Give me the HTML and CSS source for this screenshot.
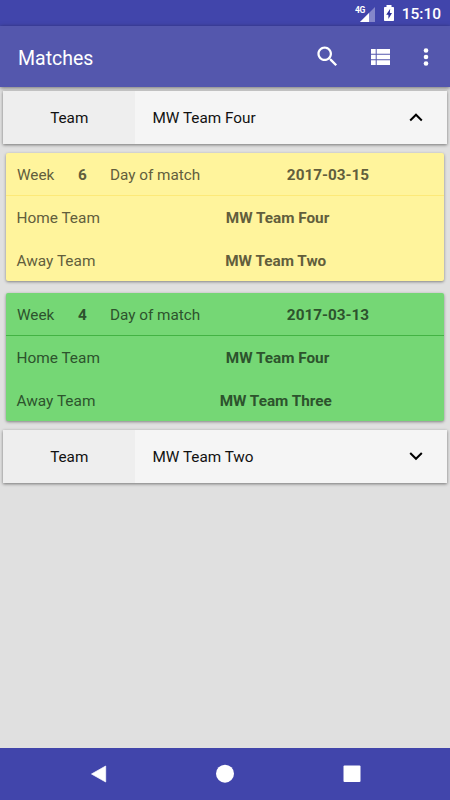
FILE: index.html
```html
<!DOCTYPE html>
<html lang="en">
<head>
<meta charset="utf-8">
<title>Matches</title>
<link rel="stylesheet" href="styles.css">
</head>
<body>
<div class="screen">
  <div class="status-bar">
    <svg class="signal" width="21" height="20" viewBox="0 0 21 20">
      <path d="M20 2v15H5z" fill="#8587ca"/>
      <path d="M14 8v9H5z" fill="#fff"/>
      <text class="network" x="0" y="8">4G</text>
    </svg>
    <svg class="battery" width="12" height="18" viewBox="0 0 12 18">
      <path d="M3.500 1h5v2h1.700q.8 0 .8.800v12.400q0 .8-.8.800H1.800q-.8 0-.8-.800V3.800q0-.8.800-.800h1.700z" fill="#fff"/>
      <path d="M7.200 4.800 3.200 10.700h2.200v4.300l3.600-6H6.800z" fill="#2c2f9b"/>
    </svg>
    <span class="clock">15:10</span>
  </div>
  <header class="app-bar">
    <h1 class="title">Matches</h1>
    <svg class="search" width="27" height="27" viewBox="0 0 24 24"><path d="M15.500 14h-.790l-.280-.270C15.410 12.590 16 11.110 16 9.500 16 5.910 13.090 3 9.500 3S3 5.910 3 9.500 5.910 16 9.500 16c1.610 0 3.090-.590 4.230-1.570l.270.280v.790l5 4.990L20.490 19l-4.990-5zm-6 0C7.010 14 5 11.990 5 9.500S7.010 5 9.500 5 14 7.010 14 9.500 11.990 14 9.500 14z"/></svg>
    <svg class="list" width="19" height="16" viewBox="0 0 19 16"><path d="M0 0h4.700v4.700H0zM5.700 0H19v4.700H5.700zM0 5.700h4.700v4.600H0zM5.700 5.700H19v4.600H5.700zM0 11.300h4.700V16H0zM5.700 11.300H19V16H5.700z"/></svg>
    <svg class="more" width="6" height="20" viewBox="0 0 6 20"><circle cx="3" cy="3.500" r="2.300"/><circle cx="3" cy="10" r="2.300"/><circle cx="3" cy="16.500" r="2.300"/></svg>
  </header>
  <main class="content">
    <section class="group">
      <div class="label">Team</div>
      <div class="name">MW Team Four</div>
      <svg class="chevron" width="14" height="10" viewBox="0 0 14 10"><path d="M1.200 8.500 7 2.700 12.800 8.500"/></svg>
    </section>
    <div class="matches">
      <article class="card yellow">
        <div class="card-head"><span class="week">Week</span><b class="number">6</b><span class="day">Day of match</span><b class="date">2017-03-15</b></div>
        <div class="row"><span class="side">Home Team</span><b class="team">MW Team Four</b></div>
        <div class="row away"><span class="side">Away Team</span><b class="team">MW Team Two</b></div>
      </article>
      <article class="card green">
        <div class="card-head"><span class="week">Week</span><b class="number">4</b><span class="day">Day of match</span><b class="date">2017-03-13</b></div>
        <div class="row"><span class="side">Home Team</span><b class="team">MW Team Four</b></div>
        <div class="row away"><span class="side">Away Team</span><b class="team">MW Team Three</b></div>
      </article>
    </div>
    <section class="group">
      <div class="label">Team</div>
      <div class="name">MW Team Two</div>
      <svg class="chevron" width="14" height="10" viewBox="0 0 14 10"><path d="M1.200 2 7 7.800 12.800 2"/></svg>
    </section>
  </main>
  <nav class="nav-bar">
    <svg width="20" height="20" viewBox="0 0 20 20"><path d="M16.700 2v16L2.500 10z" stroke="#fff" stroke-width=".7" stroke-linejoin="round"/></svg>
    <svg width="20" height="20" viewBox="0 0 20 20"><circle cx="10" cy="9.700" r="9"/></svg>
    <svg width="20" height="20" viewBox="0 0 20 20"><rect x="1.500" y="1.500" width="17" height="16.500" rx="1"/></svg>
  </nav>
</div>
</body>
</html>
```
FILE: styles.css
```css
* { box-sizing: border-box; }
body { margin: 0; font-family: Roboto, sans-serif; font-size: 15.3px; }
svg { display: block; flex: none; fill: #fff; }
b { font-weight: 700; }
.screen { display: flex; flex-direction: column; width: 450px; height: 800px; background: #e0e0e0; overflow: hidden; }
.status-bar { display: flex; align-items: center; justify-content: flex-end; height: 26px; padding-right: 9px; background: #4145ab; color: #fff; }
.signal { margin-right: 7px; margin-top: 3px; }
.network { font: 700 8.5px Roboto, sans-serif; letter-spacing: -0.5px; }
.battery { margin-right: 7px; }
.clock { font-size: 15.500px; font-weight: 500; line-height: 26px; padding-top: 2px; }
.app-bar { display: flex; align-items: center; height: 61px; flex: none; padding: 0 21px 0 18px; background: #5457ad; color: #fff; box-shadow: 0 1px 4px rgba(0,0,0,.5); }
.title { margin: 4px auto 0 0; font-size: 19.500px; font-weight: 400; line-height: 24px; }
.search { margin-right: 30px; }
.list { margin-right: 33px; }
.content { flex: 1; padding: 4px 3px 0; }
.group { display: flex; align-items: center; height: 52.5px; background: #f5f5f5; color: #111; box-shadow: 0 1px 3px rgba(0,0,0,.48); }
.label { display: flex; align-items: center; justify-content: center; width: 131.5px; height: 100%; padding: 1px 0 0 1px; background: #eee; }
.name { flex: 1; padding: 1px 0 0 18px; }
.chevron { margin-right: 24px; fill: none; stroke: #000; stroke-width: 2; }
.matches { padding: 9px 3px 9px; }
.card { height: 128.500px; border-radius: 2px; box-shadow: 0 1px 3px rgba(0,0,0,.42); }
.card + .card { margin-top: 11.500px; }
.card-head { display: grid; grid-template-columns: 61px 32px 139px 1fr; align-items: center; height: 43px; padding: 3px 0 0 11px; border-bottom: 1px solid; }
.yellow { background: #fff49c; color: #625e3c; }
.yellow .card-head { border-color: #fde978; }
.green { background: #75d775; color: #2d532d; }
.green .card-head { border-color: #43b344; }
.date { text-align: center; padding-right: 37px; }
.row { display: flex; align-items: center; height: 42.500px; padding: 2px 0 0 10.500px; }
.away { padding-top: 4px; }
.side { width: 130px; font-size: 15.4px; }
.team { width: 262px; text-align: center; }
.away .team { width: 258.500px; }
.nav-bar { display: flex; align-items: center; justify-content: space-between; flex: none; height: 52px; padding: 0 88.500px; background: #4145ab; }
```
